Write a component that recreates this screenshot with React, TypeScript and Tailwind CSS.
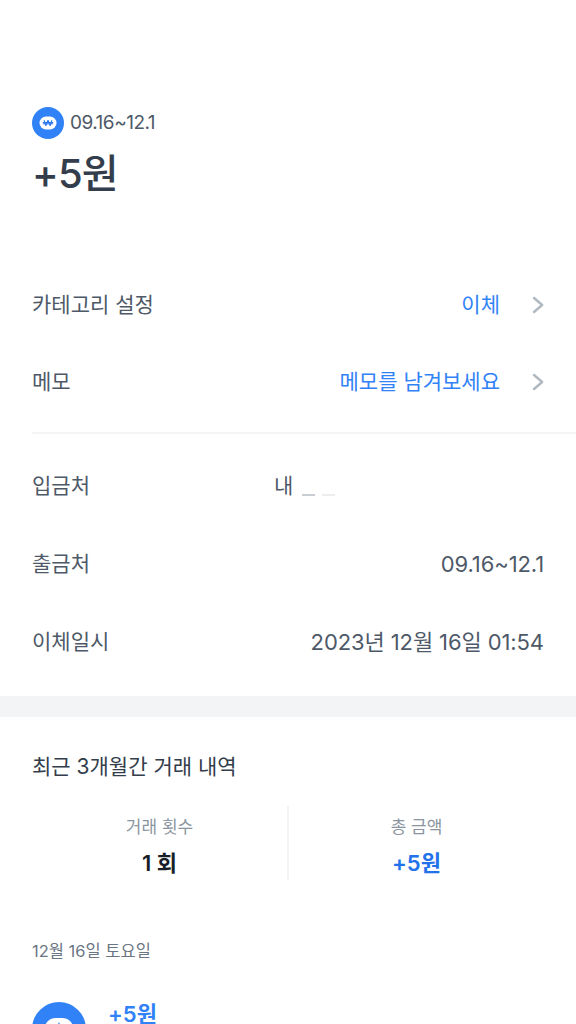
const rowLabel = "text-[21px] leading-[30px] text-[#4e5968]";
const rowValue = "text-[22px] leading-[30px] tracking-[-0.1px] text-[#4e5968]";

function Chevron() {
  return (
    <svg width="12" height="18" viewBox="0 0 12 18" fill="none" className="ml-[32px]">
      <path d="M2 2l8.2 7-8.2 7" stroke="#b0b8c1" strokeWidth="2.4" strokeLinecap="round" strokeLinejoin="round" />
    </svg>
  );
}

function LinkRow({ label, value }: { label: string; value: string }) {
  return (
    <div className="flex h-[77px] items-center justify-between">
      <span className={rowLabel}>{label}</span>
      <div className="flex items-center">
        <span className="text-[21px] leading-[30px] text-[#3182f6]">{value}</span>
        <Chevron />
      </div>
    </div>
  );
}

function InfoRow({ label, value }: { label: string; value: string }) {
  return (
    <div className="flex h-[78px] items-center justify-between">
      <span className={rowLabel}>{label}</span>
      <span className={rowValue}>{value}</span>
    </div>
  );
}

function WonBadge({ size }: { size: number }) {
  return (
    <svg width={size} height={size} viewBox="0 0 32 32" className="shrink-0">
      <circle cx="16" cy="16" r="16" fill="#3182f6" />
      <rect x="7.5" y="9.5" width="17" height="13" rx="6.5" fill="#fff" />
      <path
        d="M12.2 13.2l1.6 5.6 2.2-5.6 2.2 5.6 1.6-5.6M10.8 15.4h10.4M10.8 16.8h10.4"
        stroke="#2272eb"
        strokeWidth="1"
        fill="none"
      />
    </svg>
  );
}

export default function App() {
  return (
    <div className="h-[1024px] w-[576px] overflow-hidden bg-white font-['Inter','Noto_Sans_CJK_KR',sans-serif]">
      <section className="px-[32px] pt-[107px]">
        <div className="flex items-center gap-[6px]">
          <WonBadge size={32} />
          <span className="text-[19px] leading-[32px] tracking-[-0.5px] text-[#4e5968]">09.16~12.1</span>
        </div>
        <div className="mt-[10px] text-[40px] font-medium leading-[50px] tracking-[-0.8px] text-[#333d4b]">+5원</div>
      </section>

      <section className="mt-[67px] px-[32px]">
        <LinkRow label="카테고리 설정" value="이체" />
        <LinkRow label="메모" value="메모를 남겨보세요" />
      </section>

      <div className="ml-[32px] mt-[12px] h-[2px] bg-[#f2f4f6]" />

      <section className="mt-[13px] px-[32px]">
        <div className="flex h-[78px] items-center">
          <span className={`${rowLabel} w-[242px]`}>입금처</span>
          <span className="text-[21px] leading-[30px] text-[#4e5968]">내</span>
          <span className="ml-[9px] mt-[17px] h-[2px] w-[13px] bg-[#c9ced4] blur-[0.5px]" />
          <span className="ml-[7px] mt-[17px] h-[2px] w-[13px] bg-[#eceef0] blur-[0.5px]" />
        </div>
        <InfoRow label="출금처" value="09.16~12.1" />
        <InfoRow label="이체일시" value="2023년 12월 16일 01:54" />
      </section>

      <div className="mt-[15px] h-[21px] bg-[#f2f4f6]" />

      <section className="px-[32px] pt-[35px]">
        <h2 className="text-[21px] font-normal leading-[30px] text-[#333d4b]">최근 3개월간 거래 내역</h2>
        <div className="mt-[24px] flex h-[74px]">
          <div className="flex flex-1 flex-col items-center pt-[8px]">
            <span className="text-[17px] leading-[26px] text-[#8b95a1]">거래 횟수</span>
            <span className="mt-[9px] text-[22px] font-semibold leading-[28px] text-[#191f28]">1 회</span>
          </div>
          <div className="w-[2px] bg-[#f2f4f6]" />
          <div className="flex flex-1 flex-col items-center pt-[8px]">
            <span className="text-[17px] leading-[26px] text-[#8b95a1]">총 금액</span>
            <span className="mt-[9px] text-[22px] font-semibold leading-[28px] text-[#2272eb]">+5원</span>
          </div>
        </div>
        <div className="mt-[58px] text-[16.5px] leading-[26px] text-[#6b7684]">12월 16일 토요일</div>
        <div className="mt-[38px] flex gap-[22px]">
          <WonBadge size={54} />
          <span className="mt-[2px] text-[22px] font-semibold leading-[20px] text-[#3182f6]">+5원</span>
        </div>
      </section>
    </div>
  );
}
